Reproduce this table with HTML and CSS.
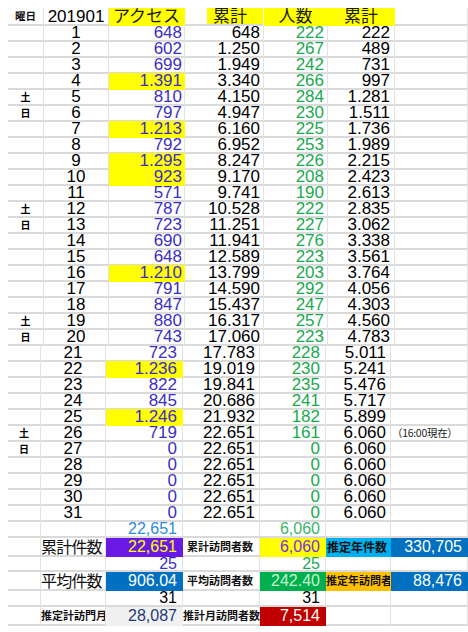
FILE: index.html
```html
<!DOCTYPE html>
<html lang="ja">
<head>
<meta charset="utf-8">
<title>201901</title>
<link rel="stylesheet" href="styles.css">
</head>
<body>
<div class="sheet">
  <div class="top">
    <div class="row hdr">
      <div class="c lab ctr">曜日</div>
      <div class="c d">201901</div>
      <div class="c jp ylw">アクセス</div>
      <div class="c jp ylw-late">累計</div>
      <div class="c jp ylw">人数</div>
      <div class="c jp ylw">累計</div>
      <div class="c"></div>
    </div>
    <div class="row"><div class="c"></div><div class="c d">1</div><div class="c n acc">648</div><div class="c n cum">648</div><div class="c n ppl">222</div><div class="c n cum2">222</div><div class="c"></div></div>
    <div class="row"><div class="c"></div><div class="c d">2</div><div class="c n acc">602</div><div class="c n cum">1.250</div><div class="c n ppl">267</div><div class="c n cum2">489</div><div class="c"></div></div>
    <div class="row"><div class="c"></div><div class="c d">3</div><div class="c n acc">699</div><div class="c n cum">1.949</div><div class="c n ppl">242</div><div class="c n cum2">731</div><div class="c"></div></div>
    <div class="row"><div class="c"></div><div class="c d">4</div><div class="c n acc hl">1.391</div><div class="c n cum">3.340</div><div class="c n ppl">266</div><div class="c n cum2">997</div><div class="c"></div></div>
    <div class="row"><div class="c wk">土</div><div class="c d">5</div><div class="c n acc">810</div><div class="c n cum">4.150</div><div class="c n ppl">284</div><div class="c n cum2">1.281</div><div class="c"></div></div>
    <div class="row"><div class="c wk">日</div><div class="c d">6</div><div class="c n acc">797</div><div class="c n cum">4.947</div><div class="c n ppl">230</div><div class="c n cum2">1.511</div><div class="c"></div></div>
    <div class="row"><div class="c"></div><div class="c d">7</div><div class="c n acc hl">1.213</div><div class="c n cum">6.160</div><div class="c n ppl">225</div><div class="c n cum2">1.736</div><div class="c"></div></div>
    <div class="row"><div class="c"></div><div class="c d">8</div><div class="c n acc">792</div><div class="c n cum">6.952</div><div class="c n ppl">253</div><div class="c n cum2">1.989</div><div class="c"></div></div>
    <div class="row"><div class="c"></div><div class="c d">9</div><div class="c n acc hl">1.295</div><div class="c n cum">8.247</div><div class="c n ppl">226</div><div class="c n cum2">2.215</div><div class="c"></div></div>
    <div class="row"><div class="c"></div><div class="c d">10</div><div class="c n acc hl">923</div><div class="c n cum">9.170</div><div class="c n ppl">208</div><div class="c n cum2">2.423</div><div class="c"></div></div>
    <div class="row"><div class="c"></div><div class="c d">11</div><div class="c n acc">571</div><div class="c n cum">9.741</div><div class="c n ppl">190</div><div class="c n cum2">2.613</div><div class="c"></div></div>
    <div class="row"><div class="c wk">土</div><div class="c d">12</div><div class="c n acc">787</div><div class="c n cum">10.528</div><div class="c n ppl">222</div><div class="c n cum2">2.835</div><div class="c"></div></div>
    <div class="row"><div class="c wk">日</div><div class="c d">13</div><div class="c n acc">723</div><div class="c n cum">11.251</div><div class="c n ppl">227</div><div class="c n cum2">3.062</div><div class="c"></div></div>
    <div class="row"><div class="c"></div><div class="c d">14</div><div class="c n acc">690</div><div class="c n cum">11.941</div><div class="c n ppl">276</div><div class="c n cum2">3.338</div><div class="c"></div></div>
    <div class="row"><div class="c"></div><div class="c d">15</div><div class="c n acc">648</div><div class="c n cum">12.589</div><div class="c n ppl">223</div><div class="c n cum2">3.561</div><div class="c"></div></div>
    <div class="row"><div class="c"></div><div class="c d">16</div><div class="c n acc hl">1.210</div><div class="c n cum">13.799</div><div class="c n ppl">203</div><div class="c n cum2">3.764</div><div class="c"></div></div>
    <div class="row"><div class="c"></div><div class="c d">17</div><div class="c n acc">791</div><div class="c n cum">14.590</div><div class="c n ppl">292</div><div class="c n cum2">4.056</div><div class="c"></div></div>
    <div class="row"><div class="c"></div><div class="c d">18</div><div class="c n acc">847</div><div class="c n cum">15.437</div><div class="c n ppl">247</div><div class="c n cum2">4.303</div><div class="c"></div></div>
    <div class="row"><div class="c wk">土</div><div class="c d">19</div><div class="c n acc">880</div><div class="c n cum">16.317</div><div class="c n ppl">257</div><div class="c n cum2">4.560</div><div class="c"></div></div>
    <div class="row"><div class="c wk">日</div><div class="c d">20</div><div class="c n acc">743</div><div class="c n cum">17.060</div><div class="c n ppl">223</div><div class="c n cum2">4.783</div><div class="c"></div></div>
  </div>

  <div class="bottom">
    <div class="row"><div class="c"></div><div class="c d">21</div><div class="c n acc">723</div><div class="c n cum">17.783</div><div class="c n ppl">228</div><div class="c n cum2">5.011</div><div class="c"></div></div>
    <div class="row"><div class="c"></div><div class="c d">22</div><div class="c n acc hl">1.236</div><div class="c n cum">19.019</div><div class="c n ppl">230</div><div class="c n cum2">5.241</div><div class="c"></div></div>
    <div class="row"><div class="c"></div><div class="c d">23</div><div class="c n acc">822</div><div class="c n cum">19.841</div><div class="c n ppl">235</div><div class="c n cum2">5.476</div><div class="c"></div></div>
    <div class="row"><div class="c"></div><div class="c d">24</div><div class="c n acc">845</div><div class="c n cum">20.686</div><div class="c n ppl">241</div><div class="c n cum2">5.717</div><div class="c"></div></div>
    <div class="row"><div class="c"></div><div class="c d">25</div><div class="c n acc hl">1.246</div><div class="c n cum">21.932</div><div class="c n ppl">182</div><div class="c n cum2">5.899</div><div class="c"></div></div>
    <div class="row"><div class="c wk">土</div><div class="c d">26</div><div class="c n acc">719</div><div class="c n cum">22.651</div><div class="c n ppl">161</div><div class="c n cum2">6.060</div><div class="c note">（16:00現在）</div></div>
    <div class="row"><div class="c wk">日</div><div class="c d">27</div><div class="c n acc">0</div><div class="c n cum">22.651</div><div class="c n ppl">0</div><div class="c n cum2">6.060</div><div class="c"></div></div>
    <div class="row"><div class="c"></div><div class="c d">28</div><div class="c n acc">0</div><div class="c n cum">22.651</div><div class="c n ppl">0</div><div class="c n cum2">6.060</div><div class="c"></div></div>
    <div class="row"><div class="c"></div><div class="c d">29</div><div class="c n acc">0</div><div class="c n cum">22.651</div><div class="c n ppl">0</div><div class="c n cum2">6.060</div><div class="c"></div></div>
    <div class="row"><div class="c"></div><div class="c d">30</div><div class="c n acc">0</div><div class="c n cum">22.651</div><div class="c n ppl">0</div><div class="c n cum2">6.060</div><div class="c"></div></div>
    <div class="row"><div class="c"></div><div class="c d">31</div><div class="c n acc">0</div><div class="c n cum">22.651</div><div class="c n ppl">0</div><div class="c n cum2">6.060</div><div class="c"></div></div>

    <div class="row sum h17"><div class="c"></div><div class="c"></div><div class="c n tot-acc">22,651</div><div class="c"></div><div class="c n tot-ppl">6,060</div><div class="c"></div><div class="c"></div></div>
    <div class="row sum h19"><div class="c"></div><div class="c big">累計件数</div><div class="c n f-purple">22,651</div><div class="c lab pl4">累計訪問者数</div><div class="c n f-yellow">6,060</div><div class="c lab f-sky wide">推定年件数</div><div class="c n f-blue">330,705</div></div>
    <div class="row sum h15"><div class="c"></div><div class="c"></div><div class="c n acc">25</div><div class="c"></div><div class="c n ppl">25</div><div class="c"></div><div class="c"></div></div>
    <div class="row sum h19"><div class="c"></div><div class="c big">平均件数</div><div class="c n f-blue">906.04</div><div class="c lab pl4">平均訪問者数</div><div class="c n f-green">242.40</div><div class="c lab f-orange clip">推定年訪問者</div><div class="c n f-blue">88,476</div></div>
    <div class="row sum h16"><div class="c"></div><div class="c"></div><div class="c n">31</div><div class="c"></div><div class="c n">31</div><div class="c"></div><div class="c"></div></div>
    <div class="row sum h19"><div class="c"></div><div class="c lab clip">推定計訪門月</div><div class="c n f-gray">28,087</div><div class="c lab">推計月訪問者数</div><div class="c n f-red">7,514</div><div class="c"></div><div class="c"></div></div>
  </div>
</div>
</body>
</html>
```

FILE: styles.css
```css
* { box-sizing: border-box; }

body {
  margin: 8px 0 0 8px;
  background: #ffffff;
  color: #000000;
  font-family: "Liberation Sans", "Noto Sans CJK JP", sans-serif;
}

.sheet { width: 460px; }

.row {
  display: grid;
  height: 16px;
}

.top .row { grid-template-columns: 36px 65px 76px 79px 64px 67px 73px; }
.bottom .row { grid-template-columns: 33px 65px 77px 77px 66px 65px 77px; }

.row.hdr { height: 17px; }

.c {
  border-right: 1px solid #e2e2e2;
  border-bottom: 2px solid #dadada;
  font-size: 17px;
  line-height: 14px;
  padding-top: 1px;
  white-space: nowrap;
}

.hdr .c { line-height: 15px; padding-top: 1px; }

.jp {
  font-family: "Noto Sans CJK JP", sans-serif;
  text-align: center;
  color: #1a1a1a;
  line-height: 13px;
}
.hdr .jp { line-height: 13px; padding-top: 0; }

.ylw { background: #ffff00; border-color: transparent; }
.ylw-late {
  background: linear-gradient(to right, #ffffff 22px, #ffff00 22px);
  border-right-color: transparent;
  text-align: right;
  padding-right: 16px;
}

.ctr { text-align: center; }

.d { text-align: center; }

.n { text-align: right; }

.top .acc { padding-right: 2px; }
.top .cum { padding-right: 3px; }
.top .ppl { padding-right: 3px; }
.top .cum2 { padding-right: 4px; }

.bottom .acc,
.bottom .ppl,
.sum .n { padding-right: 5px; }
.bottom .cum,
.bottom .cum2 { padding-right: 4px; }

.acc { color: #3b2fc6; }
.ppl { color: #19aa4f; }

.hl { background: #ffff00; border-color: transparent; }

.wk {
  font-family: "Noto Sans CJK JP", sans-serif;
  font-size: 10px;
  font-weight: bold;
  text-align: center;
  line-height: 14px;
  padding-top: 1px;
}

.lab {
  font-family: "Noto Sans CJK JP", sans-serif;
  font-size: 11px;
  font-weight: bold;
  color: #111111;
}

.hdr .lab { font-size: 10.5px; line-height: 15px; padding-top: 0; }

.note {
  font-family: "Noto Sans CJK JP", sans-serif;
  font-size: 10.5px;
  line-height: 14px;
  padding-left: 1px;
  letter-spacing: -0.3px;
  color: #222222;
}

/* summary rows */
.sum .c { padding-top: 0; font-size: 16px; }
.sum.h15 { height: 15px; }
.sum.h16 { height: 16px; }
.sum.h17 { height: 17px; }
.sum.h19 { height: 19px; }
.sum.h15 .c { line-height: 13px; }
.sum.h16 .c { line-height: 14px; }
.sum.h17 .c { line-height: 15px; }
.sum.h19 .c { line-height: 17px; }

.sum .lab { font-size: 11px; }
.sum .wide { font-size: 12px; padding-left: 1px; }
.pl4 { padding-left: 4px; }
.clip { overflow: hidden; }

.big {
  font-family: "Noto Sans CJK JP", sans-serif;
  font-size: 16px !important;
  letter-spacing: -0.8px;
  color: #111111;
}

.tot-acc { color: #2d8ae0; }
.tot-ppl { color: #3cb46a; }

.f-purple { background: #6a18e4; color: #ffff00; border-color: transparent; }
.f-yellow { background: #ffff00; color: #7a2ee8; border-color: transparent; }
.f-sky { background: #00b0f0; border-color: transparent; }
.f-blue { background: #0070c0; color: #ffffff; border-color: transparent; }
.f-green { background: #00b050; color: #c8f2cc; border-color: transparent; }
.f-orange { background: #ffc000; border-color: transparent; }
.f-gray { background: #f0f0f0; color: #1f3a74; border-color: transparent; }
.f-red { background: #c00000; color: #ffffff; border-color: transparent; }
```
